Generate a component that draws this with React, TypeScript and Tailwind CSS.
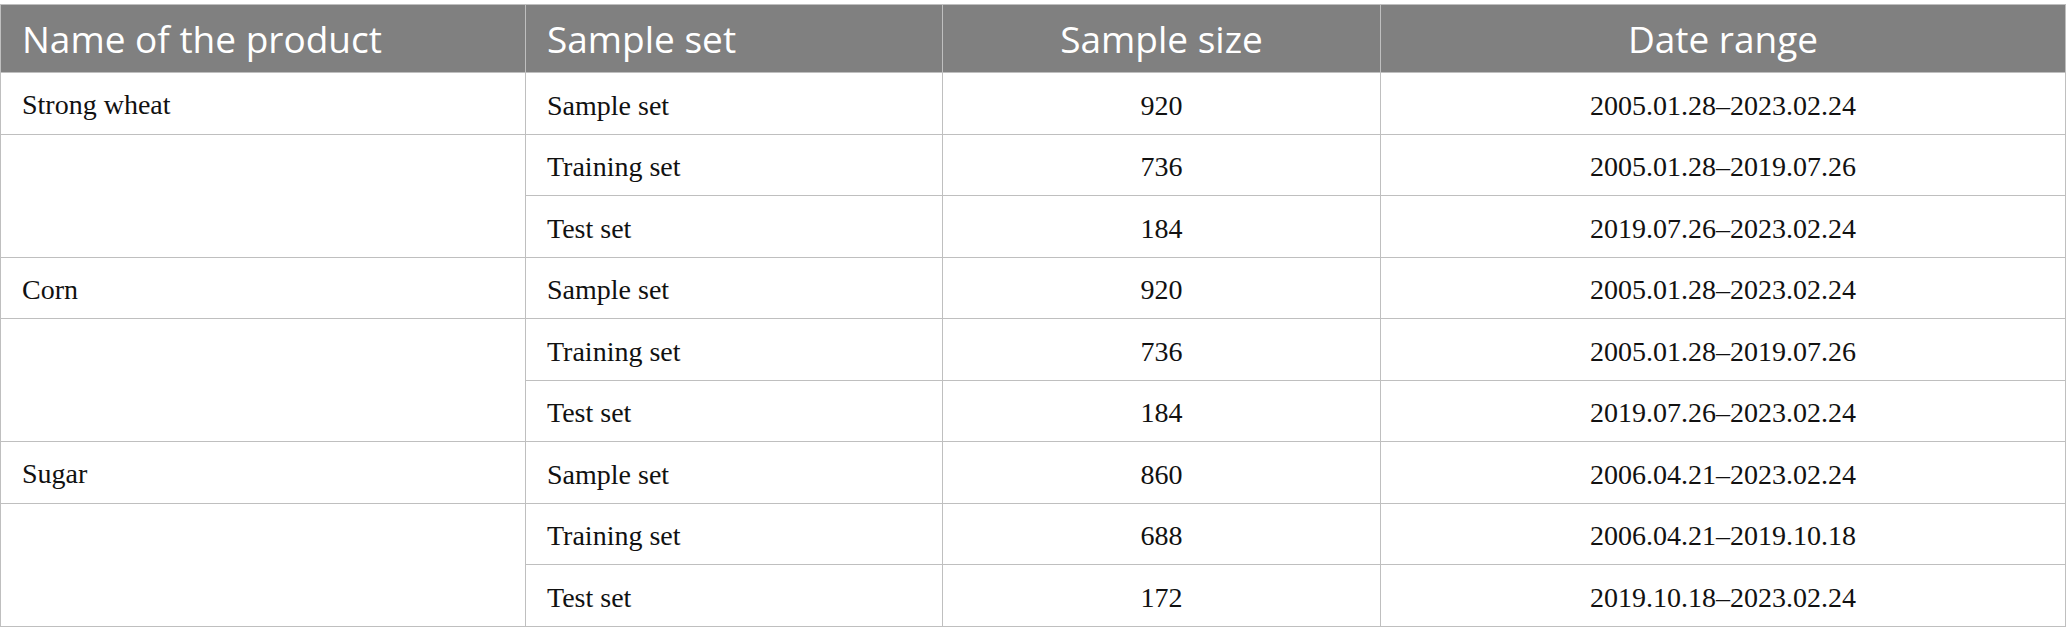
import React from "react";

type Row = { name?: string; span?: number; set: string; size: string; range: string };

const rows: Row[] = [
  { name: "Strong wheat", set: "Sample set", size: "920", range: "2005.01.28–2023.02.24" },
  { name: "", span: 2, set: "Training set", size: "736", range: "2005.01.28–2019.07.26" },
  { set: "Test set", size: "184", range: "2019.07.26–2023.02.24" },
  { name: "Corn", set: "Sample set", size: "920", range: "2005.01.28–2023.02.24" },
  { name: "", span: 2, set: "Training set", size: "736", range: "2005.01.28–2019.07.26" },
  { set: "Test set", size: "184", range: "2019.07.26–2023.02.24" },
  { name: "Sugar", set: "Sample set", size: "860", range: "2006.04.21–2023.02.24" },
  { name: "", span: 2, set: "Training set", size: "688", range: "2006.04.21–2019.10.18" },
  { set: "Test set", size: "172", range: "2019.10.18–2023.02.24" },
];

export default function App() {
  const th = "border border-[#bfbfbf] font-normal text-white text-[37px] leading-none px-[21px]";
  const td = "border border-[#bfbfbf] text-[28px] leading-none text-[#111] px-[21px] pt-[5px]";
  return (
    <div className="w-[2067px] h-[644px] bg-white pt-[4px] pr-[2px]">
      <table className="w-[2065px] border-collapse table-fixed">
        <colgroup>
          <col className="w-[525px]" />
          <col className="w-[417px]" />
          <col className="w-[438px]" />
          <col className="w-[685px]" />
        </colgroup>
        <thead>
          <tr className="h-[68px] bg-[#808080]" style={{ fontFamily: '"Open Sans", "Noto Sans", sans-serif' }}>
            <th className={th + " text-left"}>Name of the product</th>
            <th className={th + " text-left"}>Sample set</th>
            <th className={th + " text-center"}>Sample size</th>
            <th className={th + " text-center"}>Date range</th>
          </tr>
        </thead>
        <tbody style={{ fontFamily: '"Liberation Serif", "Times New Roman", serif' }}>
          {rows.map((r, i) => (
            <tr key={i} className="h-[61.5px]">
              {r.name !== undefined && (
                <td className={td + " text-left align-top pt-[18px]"} rowSpan={r.span ?? 1}>
                  {r.name}
                </td>
              )}
              <td className={td + " text-left"}>{r.set}</td>
              <td className={td + " text-center"}>{r.size}</td>
              <td className={td + " text-center"}>{r.range}</td>
            </tr>
          ))}
        </tbody>
      </table>
    </div>
  );
}
